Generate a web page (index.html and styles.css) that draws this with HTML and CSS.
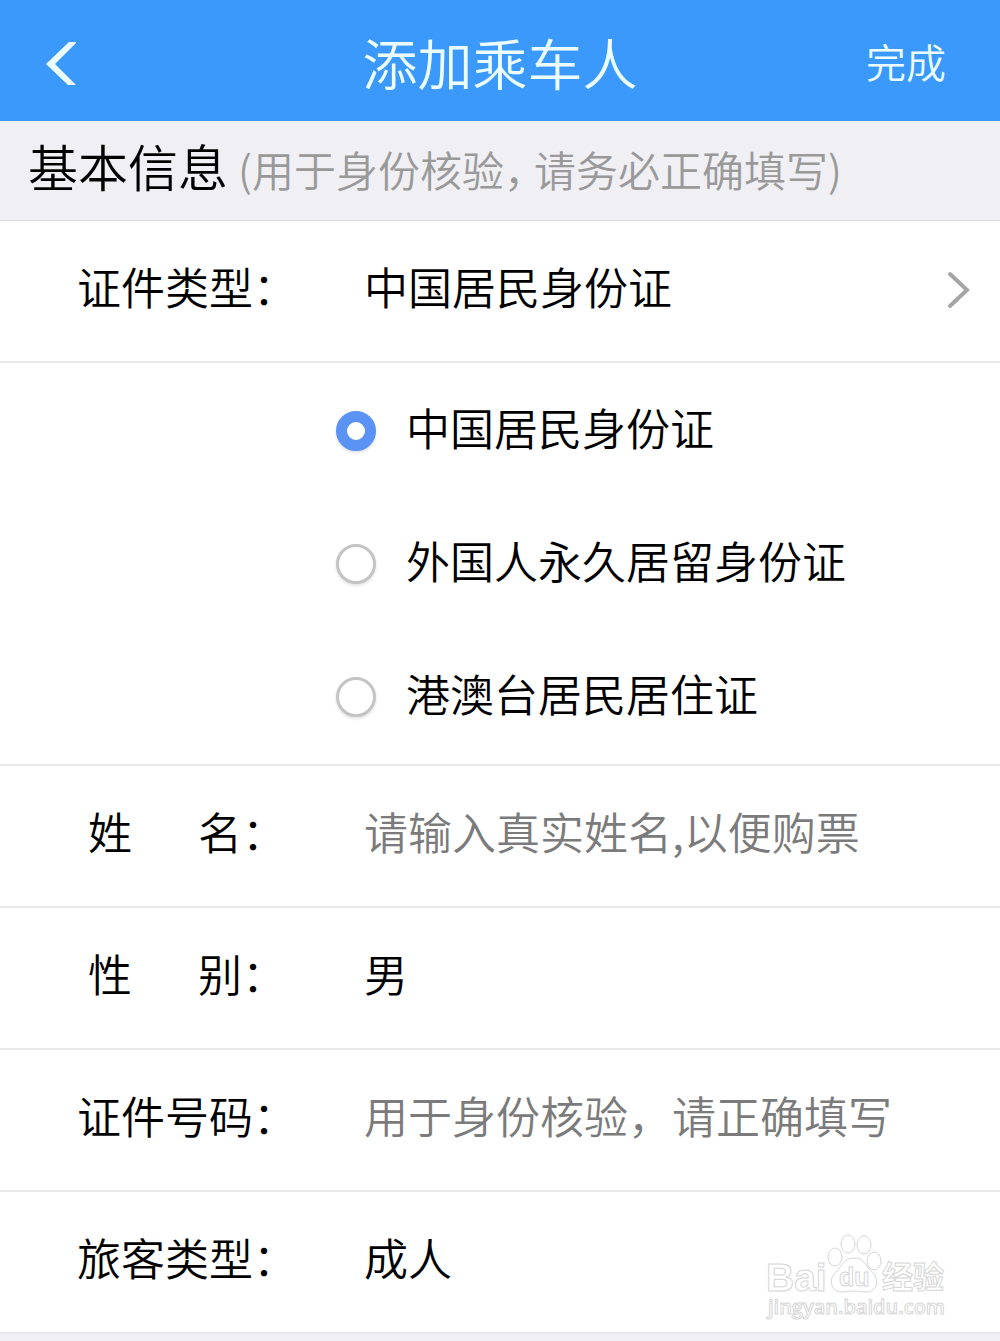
FILE: index.html
```html
<!DOCTYPE html>
<html lang="zh-CN">
<head>
<meta charset="utf-8">
<meta name="viewport" content="width=device-width, initial-scale=1">
<title>添加乘车人</title>
<link rel="stylesheet" href="styles.css">
</head>
<body>
<form class="page">
  <header class="bar">
    <button class="back" type="button" aria-label="返回">
      <svg width="30" height="44" viewBox="0 0 30 44" fill="currentColor"><path d="M23 0h8L9 22l21 21h-8L0 22z"/></svg>
    </button>
    <h1 class="title">添加乘车人</h1>
    <button class="done" type="submit">完成</button>
  </header>

  <div class="section">
    <h2 class="section-title">基本信息</h2>
    <p class="section-hint">(用于身份核验<span class="comma">，</span>请务必正确填写)</p>
  </div>

  <main class="fields">
    <div class="row">
      <span class="label" id="type-label">证件类型：</span>
      <button class="value picker" type="button" aria-labelledby="type-label type-value">
        <span id="type-value">中国居民身份证</span>
        <svg class="chevron" width="26" height="40" viewBox="0 0 26 40" fill="none" stroke="currentColor" stroke-width="4" stroke-linecap="round"><path d="M4 5l17 16L4 37"/></svg>
      </button>
    </div>

    <div class="options" role="radiogroup" aria-labelledby="type-label">
      <label class="option"><input class="radio" type="radio" name="type" checked><span class="option-text">中国居民身份证</span></label>
      <label class="option"><input class="radio" type="radio" name="type"><span class="option-text">外国人永久居留身份证</span></label>
      <label class="option"><input class="radio" type="radio" name="type"><span class="option-text">港澳台居民居住证</span></label>
    </div>

    <div class="row">
      <label class="label spread" for="name"><span>姓</span><span>名：</span></label>
      <input class="value" id="name" type="text" placeholder="请输入真实姓名,以便购票">
    </div>
    <div class="row">
      <label class="label spread" for="gender"><span>性</span><span>别：</span></label>
      <select class="value" id="gender"><option>男</option><option>女</option></select>
    </div>
    <div class="row">
      <label class="label" for="number">证件号码：</label>
      <input class="value" id="number" type="text" placeholder="用于身份核验，请正确填写">
    </div>
    <div class="row">
      <label class="label" for="passenger">旅客类型：</label>
      <select class="value" id="passenger"><option>成人</option><option>儿童</option><option>学生</option></select>
    </div>

    <svg class="watermark" width="190" height="96" viewBox="0 0 190 96" aria-hidden="true">
      <g class="outline">
        <text class="brand" x="2" y="60">Bai</text>
        <ellipse cx="71" cy="26" rx="7" ry="9"/>
        <ellipse cx="84" cy="13" rx="7" ry="9"/>
        <ellipse cx="100" cy="14" rx="7" ry="9"/>
        <ellipse cx="110" cy="30" rx="7" ry="9"/>
        <path d="M90 27c-10 0-11 7-17 13-10 8-6 21 5 21 5 0 7-1 12-1s7 1 12 1c11 0 15-13 5-21-6-6-7-13-17-13z"/>
        <text class="du" x="75" y="55">du</text>
        <text class="cn" x="118" y="57">经验</text>
        <text class="site" x="4" y="83">jingyan.baidu.com</text>
      </g>
    </svg>
  </main>
</form>
</body>
</html>
```
FILE: styles.css
```css
* {
  box-sizing: border-box;
}

body {
  margin: 0;
  background: #efeff4;
  color: #000;
  font-family: "Noto Sans CJK SC", sans-serif;
  font-size: 44px;
  font-weight: 350;
  line-height: 64px;
}

button,
input,
select {
  margin: 0;
  padding: 0;
  border: 0;
  background: none;
  color: inherit;
  font: inherit;
  text-align: left;
}

.bar {
  display: grid;
  grid-template-columns: 1fr auto 1fr;
  align-items: center;
  height: 121px;
  padding: 0 46px;
  background: #3c99fc;
  color: #ecfdff;
}

.back {
  display: flex;
  justify-self: start;
  padding-top: 6px;
}

.title {
  margin: 0;
  font-size: 55px;
  font-weight: inherit;
}

.done {
  justify-self: end;
  padding-right: 8px;
  font-size: 40px;
}

.section {
  display: flex;
  align-items: baseline;
  gap: 10px;
  height: 100px;
  padding: 12px 28px 0;
  border-bottom: 1px solid #dcdce0;
}

.section-title,
.section-hint {
  margin: 0;
  font-weight: inherit;
}

.section-title {
  font-size: 50px;
}

.section-hint {
  color: #999;
  font-size: 42px;
}

.comma {
  margin-right: 9px;
  font-feature-settings: "halt";
}

.fields {
  position: relative;
  background: #fff;
}

.row {
  display: flex;
  align-items: center;
  min-height: 142px;
  padding: 0 28px 10px 22px;
  border-bottom: 2px solid #e8e8ea;
}

.label {
  flex: 0 0 330px;
  text-align: center;
}

.spread {
  display: flex;
  justify-content: center;
  gap: 66px;
}

.value {
  flex: 1;
  min-width: 0;
  height: 64px;
  margin-left: 12px;
  appearance: none;
}

.value::placeholder {
  color: #7b7b7b;
  opacity: 1;
}

.picker {
  display: flex;
  align-items: center;
  justify-content: space-between;
}

.chevron {
  margin-top: 6px;
  color: #a5a5a5;
}

.options {
  padding: 1px 0 1px 336px;
  border-bottom: 2px solid #e8e8ea;
}

.option {
  display: flex;
  align-items: center;
  gap: 30px;
  height: 133px;
}

.option-text {
  padding-bottom: 8px;
}

.radio {
  flex: none;
  width: 40px;
  height: 40px;
  border: 3px solid #c4c4c4;
  border-radius: 50%;
  background: #fff;
  box-shadow: 0 2px 3px #e4e4e4;
  appearance: none;
}

.radio:checked {
  border: 11px solid #5b93f5;
}

.watermark {
  position: absolute;
  right: 46px;
  bottom: 7px;
  pointer-events: none;
}

.outline {
  fill: #fff;
  stroke: #d6d6d6;
  stroke-width: 1;
  font-family: "Open Sans", sans-serif;
  font-weight: 600;
}

.brand {
  font-family: "Liberation Sans", sans-serif;
  font-size: 39px;
  font-weight: 700;
}

.du {
  font-family: "Liberation Sans", sans-serif;
  font-size: 25px;
}

.cn {
  font-family: "Noto Sans CJK SC", sans-serif;
  font-size: 31px;
  font-weight: 700;
}

.site {
  font-size: 20px;
}
```
